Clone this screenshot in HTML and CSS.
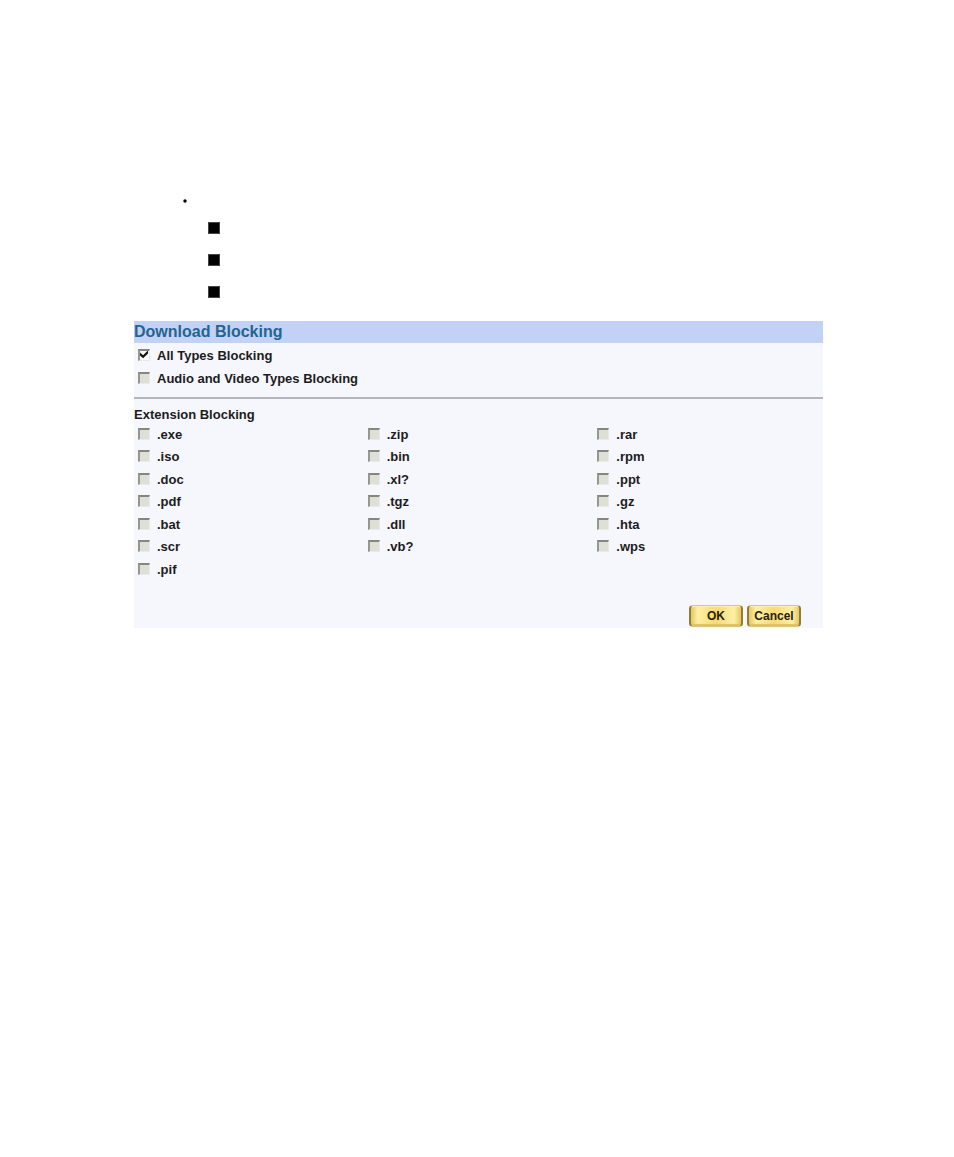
FILE: index.html
```html
<!DOCTYPE html>
<html lang="en">
<head>
<meta charset="utf-8">
<meta name="viewport" content="width=device-width, initial-scale=1">
<title>Download Blocking</title>
<link rel="stylesheet" href="styles.css">
</head>
<body>
<main class="page">
  <div class="outline" aria-hidden="true">
    <svg class="dot" viewBox="0 0 4 4"><circle cx="2" cy="2" r="1.7"/></svg>
    <div class="squares">
      <span class="square"></span>
      <span class="square"></span>
      <span class="square"></span>
    </div>
  </div>
  <form class="panel">
    <h1 class="title">Download Blocking</h1>
    <div class="types">
      <label class="option"><input class="check" type="checkbox" checked>All Types Blocking</label>
      <label class="option"><input class="check" type="checkbox">Audio and Video Types Blocking</label>
    </div>
    <hr class="rule">
    <h2 class="subtitle" id="ext">Extension Blocking</h2>
    <div class="extensions" role="group" aria-labelledby="ext">
      <label class="option"><input class="check" type="checkbox">.exe</label>
      <label class="option"><input class="check" type="checkbox">.zip</label>
      <label class="option"><input class="check" type="checkbox">.rar</label>
      <label class="option"><input class="check" type="checkbox">.iso</label>
      <label class="option"><input class="check" type="checkbox">.bin</label>
      <label class="option"><input class="check" type="checkbox">.rpm</label>
      <label class="option"><input class="check" type="checkbox">.doc</label>
      <label class="option"><input class="check" type="checkbox">.xl?</label>
      <label class="option"><input class="check" type="checkbox">.ppt</label>
      <label class="option"><input class="check" type="checkbox">.pdf</label>
      <label class="option"><input class="check" type="checkbox">.tgz</label>
      <label class="option"><input class="check" type="checkbox">.gz</label>
      <label class="option"><input class="check" type="checkbox">.bat</label>
      <label class="option"><input class="check" type="checkbox">.dll</label>
      <label class="option"><input class="check" type="checkbox">.hta</label>
      <label class="option"><input class="check" type="checkbox">.scr</label>
      <label class="option"><input class="check" type="checkbox">.vb?</label>
      <label class="option"><input class="check" type="checkbox">.wps</label>
      <label class="option"><input class="check" type="checkbox">.pif</label>
    </div>
    <div class="actions">
      <button class="button" type="button">OK</button>
      <button class="button" type="button">Cancel</button>
    </div>
  </form>
</main>
</body>
</html>
```
FILE: styles.css
```css
* { box-sizing: border-box; }

body {
  margin: 0;
  background: #fff;
  color: #1c1c1c;
  font: bold 13px/16px "Liberation Sans", Arial, sans-serif;
}

.page { padding: 199px 131px 0 134px; }

.outline { padding: 0 0 23px 49px; }
.dot { display: block; width: 4px; height: 4px; }
.squares {
  display: flex;
  flex-direction: column;
  gap: 20px;
  padding: 19px 0 0 25px;
}
.square {
  width: 12px;
  height: 12px;
  background: #000;
  border: 1px solid #444;
}

.panel { background: #f6f6fd; }

.title {
  margin: 0;
  background: #c3d1f5;
  color: #22668f;
  font-size: 16px;
  line-height: 22px;
}

.types { display: grid; grid-auto-rows: 23px; padding-top: 1px; }

.option { display: flex; align-items: center; gap: 7px; padding-left: 4px; }

.check {
  appearance: none;
  flex: none;
  width: 12px;
  height: 12px;
  margin: 0 0 2px;
  background: #dedfd7;
  border: solid;
  border-width: 2px 1px 1px 2px;
  border-color: #85867e #e9e9e6 #e9e9e6 #96978f;
}
.check:checked { background: #f7f7f4; }
.check:checked::before {
  content: "";
  display: block;
  width: 8px;
  height: 8px;
  background: #111;
  clip-path: polygon(0 25%, 38% 60%, 100% 0, 100% 38%, 38% 98%, 0 62%);
}

.rule {
  height: 2px;
  margin: 7px 0 8px;
  border: 0;
  background: #b5b5bb;
}

.subtitle { margin: 0; font-size: 13px; line-height: 16px; }

.extensions {
  display: grid;
  grid-template-columns: repeat(3, 1fr);
  grid-template-rows: repeat(3, 23px 22px) 23px;
}

.actions {
  display: flex;
  justify-content: flex-end;
  gap: 4px;
  padding: 24px 22px 1px 0;
}

.button {
  width: 54px;
  height: 22px;
  padding: 0;
  border: solid;
  border-width: 1px 2px;
  border-color: #d8c67e #937c38;
  border-radius: 4px;
  background: linear-gradient(90deg, #e6c766, #fdf0a4 14%, #f6da75 50%, #fdf0a4 86%, #e6c766);
  box-shadow: inset 0 -2px 1px #dfc05c, inset 0 1px 0 #fff2b2;
  color: #28220c;
  font: bold 12px/18px "Liberation Sans", Arial, sans-serif;
}
```
